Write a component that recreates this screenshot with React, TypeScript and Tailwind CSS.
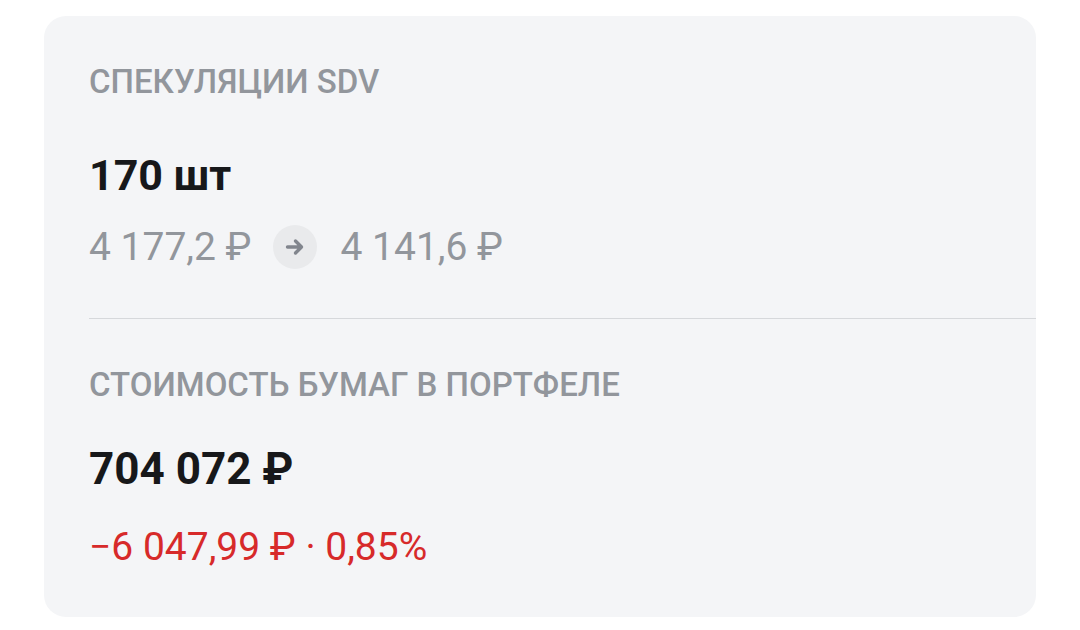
import React from 'react';

const ArrowIcon: React.FC = () => (
    <svg width="20" height="18" viewBox="0 0 20 18" fill="none">
        <path d="M2.5 9h14M10.5 3 16.5 9l-6 6" stroke="#81858d" strokeWidth="3.4" strokeLinecap="round" strokeLinejoin="round" />
    </svg>
);

const App: React.FC = () => {
    return (
        <div className="w-[1080px] h-[630px] bg-white pt-4 pl-11 font-['Roboto',sans-serif]">
            <div className="w-[992px] h-[601px] bg-[#f4f5f7] rounded-[22px] pl-[45px] pt-[46px] flex flex-col">
                {/* Позиция */}
                <div className="text-[33px] leading-[40px] font-medium text-[#92969c]">СПЕКУЛЯЦИИ SDV</div>
                <div className="mt-[49px] text-[43px] leading-[48px] font-bold text-[#17181a]">170 шт</div>
                <div className="mt-[26px] flex items-center text-[39px] leading-[44px] text-[#92969c]">
                    <span>4 177,2 ₽</span>
                    <span className="ml-[21px] mr-[24px] w-[44px] h-[44px] rounded-full bg-[#e9eaec] flex items-center justify-center">
                        <ArrowIcon />
                    </span>
                    <span>4 141,6 ₽</span>
                </div>
                <div className="mt-[49px] h-px bg-[#d6d8db]" />

                {/* Стоимость */}
                <div className="mt-[46px] text-[33px] leading-[40px] font-medium text-[#92969c]">СТОИМОСТЬ БУМАГ В ПОРТФЕЛЕ</div>
                <div className="mt-[40px] text-[44px] leading-[48px] font-bold text-[#17181a]">704 072 ₽</div>
                <div className="mt-[32px] text-[39px] leading-[44px] text-[#d72a2a]">−6 047,99 ₽ · 0,85%</div>
            </div>
        </div>
    );
};

export default App;
